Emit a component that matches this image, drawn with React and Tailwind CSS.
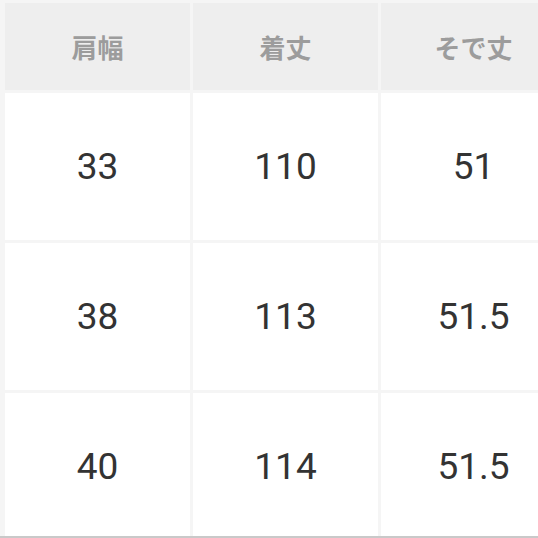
export default function App() {
  const headers = ["肩幅", "着丈", "そで丈"];
  const rows = [
    ["33", "110", "51"],
    ["38", "113", "51.5"],
    ["40", "114", "51.5"],
  ];
  return (
    <div className="w-[538px] h-[538px] overflow-hidden bg-[#f5f5f5] border-b-2 border-[#c9c9c9]">
      <div className="grid grid-cols-[185px_185px_185px] grid-rows-[87px_147px_147px_147px] gap-[3px] pt-[3px] pl-[5px] w-[600px]">
        {headers.map((h) => (
          <div
            key={h}
            className="bg-[#eeeeee] flex items-center justify-center text-[26px] font-bold text-[#9c9c9c]"
            style={{ fontFamily: '"Noto Sans CJK JP", "Noto Sans", sans-serif' }}
          >
            {h}
          </div>
        ))}
        {rows.flat().map((v, i) => (
          <div
            key={i}
            className="bg-white flex items-center justify-center text-[37px] text-[#333333]"
            style={{ fontFamily: 'Roboto, "Noto Sans", sans-serif' }}
          >
            {v}
          </div>
        ))}
      </div>
    </div>
  );
}
